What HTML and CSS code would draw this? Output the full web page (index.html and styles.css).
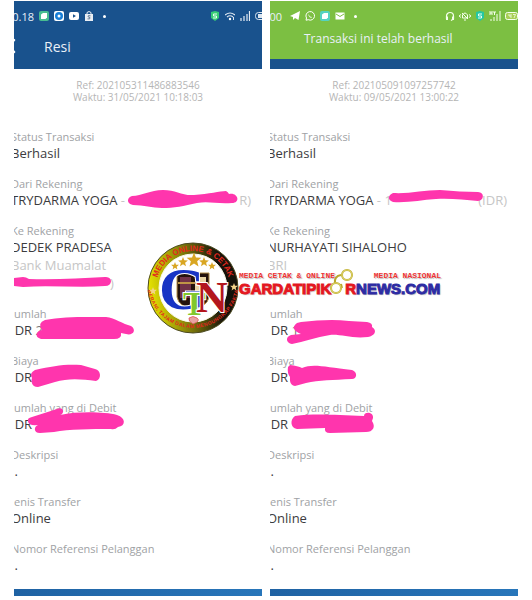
FILE: index.html
```html
<!DOCTYPE html>
<html lang="id">
<head>
  <meta charset="UTF-8" />
  <meta name="viewport" content="width=device-width, initial-scale=1.0"/>
  <title>Resi Transaksi</title>
  <link rel="stylesheet" href="styles.css">
</head>
<body>
  <main class="receipts">

    <!-- Resi 1 -->
    <section class="receipt">
      <header class="header">
        <div class="status-bar">
          <span class="clock">10.18</span>
          <svg class="icon" viewBox="0 0 10 10"><rect width="10" height="10" rx="2" fill="#48bd91"/><path d="M2 3.500 4 2h4v4.500L6.500 8H2z" fill="#fff"/></svg>
          <svg class="icon" viewBox="0 0 10 10"><rect width="10" height="10" rx="2" fill="#fff"/><circle cx="5" cy="5" r="4" fill="#187fd8"/><circle cx="5" cy="5" r="1.500" fill="#fff"/></svg>
          <svg class="icon" viewBox="0 0 10 10"><rect y="1" width="10" height="8" rx="2" fill="#fff"/><path d="M4 3.200v3.600L7 5z" fill="#19528d"/></svg>
          <svg class="icon" viewBox="0 0 10 10"><path d="M1 3h8v7H1z" fill="#e9eef4"/><path d="M3 3V1.500Q5-.5 7 1.500V3" fill="none" stroke="#e9eef4"/><path d="M6.500 4.800Q3.500 4 4 5.700L6 6.600Q6.500 8.500 3.500 7.900" fill="none" stroke="#58708c" stroke-width=".9"/></svg>
          <span class="dot"></span>
          <span class="system">
            <svg class="icon" viewBox="0 0 10 10"><path d="M1 1 5 0l4 1v6L5 10 1 7z" fill="#35cb75"/><path d="M7 3H3.500v2h3v2H3" fill="none" stroke="#e8fff0"/></svg>
            <svg class="icon" viewBox="0 0 10 10"><path d="M0 4q5-4 10 0M2 6q3-2.500 6 0" fill="none" stroke="#dbe5ef" stroke-width="1.200"/><circle cx="5" cy="8" r="1.200" fill="#fff"/><path d="M8.500 6v3" stroke="#dbe5ef"/></svg>
            <svg class="icon" viewBox="0 0 10 10"><path d="M1 7v3M4 5v5M7 3v7M9.500 0v10" stroke="#e4ecf4" stroke-width="1.200"/></svg>
            <svg class="icon battery" viewBox="0 0 14 10"><rect x=".5" y="1.500" width="13" height="7" rx="3" fill="none" stroke="#dbe5ef"/><path d="M3 3h5v4H3z" fill="#dbe5ef"/></svg>
          </span>
        </div>
        <div class="title-bar">
          <button type="button" class="back" aria-label="Kembali"><svg viewBox="0 0 12 16"><path d="m10 2-7 6 7 6" fill="none" stroke="#fff" stroke-width="2.500" stroke-linecap="round"/></svg></button>
          <h1 class="title">Resi</h1>
        </div>
      </header>

      <p class="meta">Ref: 202105311486883546<br>Waktu: 31/05/2021 10:18:03</p>

      <dl class="details">
        <div class="row"><dt>Status Transaksi</dt><dd>Berhasil</dd></div>
        <div class="row">
          <dt>Dari Rekening</dt>
          <dd class="account"><span>TRYDARMA YOGA <i>-</i></span><i>R)</i>
            <svg class="scribble" viewBox="0 0 248 30"><path d="M118 6C128 6 136 0 149 0C162 0 168 6 180 5C195 4 206 1 212 1Q214 2 215 4C224 2 227 13 218 13C202 14 195 11 183 13C170 16 160 18 148 18C138 18 130 15 119 15C112 14 113 7 118 6Z"/></svg>
          </dd>
        </div>
        <div class="row">
          <dt>Ke Rekening</dt>
          <dd>DEDEK PRADESA</dd>
          <dd><i>Bank Muamalat</i></dd>
          <dd class="number"><i>)</i>
            <svg class="scribble" viewBox="0 0 248 30"><path d="M0 6 9 5Q12 5 15 7C42 8 67 6 91 5C99 4 99 14 91 14C65 16 35 13 9 15L0 14Z"/></svg>
          </dd>
        </div>
        <div class="row">
          <dt>Jumlah</dt>
          <dd>IDR <i class="digit">2</i>
            <svg class="scribble" viewBox="0 0 248 30"><path d="M31 0C50-4 78-3 92-3C101-2 109 4 117 6C123 10 119 16 112 14L107 13Q108 19 100 19L27 19C20 17 22 11 28 10Q23 3 31 0Z"/></svg>
          </dd>
        </div>
        <div class="row">
          <dt>Biaya</dt>
          <dd>IDR
            <svg class="scribble" viewBox="0 0 248 30"><path d="M21 3C39-1 50-3 67-2L81 2C87 3 88 12 82 14C67 12 54 11 41 15L24 20C17 20 17 13 18 11Q15 6 21 3Z"/></svg>
          </dd>
        </div>
        <div class="row">
          <dt>Jumlah yang di Debit</dt>
          <dd>IDR
            <svg class="scribble" viewBox="0 0 248 30"><path d="M18 3 43-5C50-8 51 0 46 1C65-3 91-2 103 1C112 4 112 12 104 13Q101 16 97 15C77 15 55 15 40 18L26 19C19 19 20 12 24 11Q14 12 14 7Q13 4 18 3Z"/></svg>
          </dd>
        </div>
        <div class="row"><dt>Deskripsi</dt><dd>&nbsp;.</dd></div>
        <div class="row"><dt>Jenis Transfer</dt><dd>Online</dd></div>
        <div class="row"><dt>Nomor Referensi Pelanggan</dt><dd>&nbsp;.</dd></div>
      </dl>
      <div class="bottom-bar"></div>
    </section>

    <!-- Resi 2 -->
    <section class="receipt">
      <header class="header success">
        <div class="status-bar">
          <span class="clock">13:00</span>
          <svg class="icon" viewBox="0 0 10 10"><path d="M0 5 10 0 8.500 9 5 7 3 9V6z" fill="#fff"/></svg>
          <svg class="icon" viewBox="0 0 10 10"><path d="M1 9.200 1.500 7A4.300 4.300 0 1 1 3.300 8.700z" fill="none" stroke="#fff"/><path d="M3.500 3C3 5 5 7.500 7 6.700L6 5.500 5 5.700 4.300 4.400z" fill="#fff"/></svg>
          <svg class="icon" viewBox="0 0 10 10"><rect width="10" height="10" rx="2" fill="#54d3c0"/><path d="M2 3.500 4 2h4v4.500L6.500 8H2z" fill="#fff"/></svg>
          <svg class="icon" viewBox="0 0 10 10"><rect x=".5" y="1.500" width="9" height="7" fill="#fff"/><path d="m1 3 4 2.500L9 3" fill="none" stroke="#7cbf42"/></svg>
          <span class="dot"></span>
          <span class="system">
            <svg class="icon" viewBox="0 0 10 10"><path d="M1.500 8V5a3.500 3.500 0 0 1 7 0v3L6 9.500" fill="none" stroke="#f5ffec" stroke-width="1.200"/><path d="M1 5.500h2V9H1zM7 5.500h2V9H7z" fill="#f5ffec"/></svg>
            <svg class="icon bell" viewBox="0 0 12 10"><path d="M3.500 7V4q2.500-4 5 0v3zM5 9h2M2 3.500 0 5l2 1.500M10 3.500 12 5l-2 1.500M3 2l6 6" fill="none" stroke="#f5ffec"/></svg>
            <svg class="icon" viewBox="0 0 10 10"><path d="M1 1 5 0l4 1v6L5 10 1 7z" fill="#24c7a3"/><path d="M7 3H3.500v2h3v2H3" fill="none" stroke="#e8fff0"/></svg>
            <svg class="icon signal" viewBox="0 0 12 10"><path d="M1 0v4M3 0v4M1 2h2M4 1h3M5.500 1v3M2 8v2M5 6v4M8 3v7M11 0v10" fill="none" stroke="#f5ffec"/></svg>
            <svg class="icon battery" viewBox="0 0 14 10"><rect x=".5" y="1.500" width="12" height="7" rx="2" fill="#a8cf55" stroke="#f5ffec"/><path d="M4 3v2h2M6 3v4M8 3.500h2.500L9 7" fill="none" stroke="#f5ffec" stroke-width=".8"/></svg>
          </span>
        </div>
        <p class="toast">Transaksi ini telah berhasil</p>
      </header>

      <p class="meta">Ref: 202105091097257742<br>Waktu: 09/05/2021 13:00:22</p>

      <dl class="details">
        <div class="row"><dt>Status Transaksi</dt><dd>Berhasil</dd></div>
        <div class="row">
          <dt>Dari Rekening</dt>
          <dd class="account"><span>TRYDARMA YOGA <i>- 1</i></span><i>(IDR)</i>
            <svg class="scribble" viewBox="0 0 248 30"><path d="M123 3C139 4 154 0 170 0C184 1 196 2 208 2C215 2 214 11 208 11C195 10 180 8 166 9C151 10 138 13 123 12C117 10 118 5 123 3Z"/></svg>
          </dd>
        </div>
        <div class="row">
          <dt>Ke Rekening</dt>
          <dd>NURHAYATI SIHALOHO</dd>
          <dd><i>BRI</i></dd>
          <dd class="number"></dd>
        </div>
        <div class="row">
          <dt>Jumlah</dt>
          <dd>IDR <i class="digit">1</i>
            <svg class="scribble" viewBox="0 0 248 30"><path d="M31 2C49 0 64-1 79 1L97 2Q103 3 102 7C108 11 104 16 98 17C82 19 71 14 60 15C46 17 34 22 22 24C16 23 15 17 21 15L31 14Q19 9 27 3Z"/></svg>
          </dd>
        </div>
        <div class="row">
          <dt>Biaya</dt>
          <dd>IDR
            <svg class="scribble" viewBox="0 0 248 30"><path d="M20-2Q28-1 32 1C43-4 55 0 82 3C88 5 87 12 82 12C63 13 49 13 36 16L25 19C19 18 20 12 20 10Q17 6 18 0Z"/></svg>
          </dd>
        </div>
        <div class="row">
          <dt>Jumlah yang di Debit</dt>
          <dd>IDR
            <svg class="scribble" viewBox="0 0 248 30"><path d="M25 2C45-1 66 1 94 2C94-3 104-2 103 4L102 7C106 13 103 18 96 18L60 19Q54 19 55 14L27 15C20 14 20 5 25 2Z"/></svg>
          </dd>
        </div>
        <div class="row"><dt>Deskripsi</dt><dd>&nbsp;.</dd></div>
        <div class="row"><dt>Jenis Transfer</dt><dd>Online</dd></div>
        <div class="row"><dt>Nomor Referensi Pelanggan</dt><dd>&nbsp;.</dd></div>
      </dl>
      <div class="bottom-bar"></div>
    </section>

    <!-- Watermark -->
    <div class="watermark">
      <svg class="emblem" viewBox="0 0 92 92">
        <defs>
          <linearGradient id="ring" x1="0" y1=".5" x2="1" y2=".4">
            <stop offset="0" stop-color="#e8e500"/>
            <stop offset=".45" stop-color="#77730b"/>
            <stop offset=".8" stop-color="#15120a"/>
          </linearGradient>
          <path id="arcTop" d="M9 46a37 37 0 0 1 74 0"/>
          <path id="arcBottom" d="M5 40a41 41 0 0 0 82 0"/>
          <path id="star" d="m0-5 1.300 3.300 3.600.2-2.800 2.300.9 3.500L0 2.300l-3 2 .9-3.500-2.800-2.300 3.600-.2z"/>
        </defs>
        <circle cx="46" cy="46" r="45" fill="url(#ring)" stroke="#4b4920"/>
        <circle cx="46" cy="46" r="34" fill="#fff" stroke="#f8f8e7"/>
        <text class="ring-text"><textPath href="#arcTop" startOffset="50%" text-anchor="middle">MEDIA ONLINE &amp; CETAK</textPath></text>
        <text class="ring-text small" dy="5"><textPath href="#arcBottom" startOffset="50%" text-anchor="middle">BERANI, TAJAM DALAM MENGUNGKAP FAKTA</textPath></text>
        <g fill="#d9a622">
          <use href="#star" transform="translate(28 24) scale(.8)"/>
          <use href="#star" transform="translate(36 20)"/>
          <use href="#star" transform="translate(47 18) scale(1.500)"/>
          <use href="#star" transform="translate(57 20)"/>
          <use href="#star" transform="translate(65 24) scale(.8)"/>
          <use href="#star" transform="translate(6 49) scale(.8)" fill="#f4d58a"/>
          <use href="#star" transform="translate(87 45) scale(.8)" fill="#f4d58a"/>
        </g>
        <path d="M30 31h32v24q-2 10-16 12-14-2-16-12z" fill="#24120c" stroke="#b6904b"/>
        <path d="M33 35h11v21H33z" fill="#713248"/>
        <path d="M48 35h11v21H48z" fill="#e9d4a4"/>
        <path d="M31 41h30" stroke="#bf9646" stroke-width="2"/>
        <path d="M42 76q4-3 8 0t-4 6q-5-3-4-6z" fill="#e8a3a3" stroke="#d55" stroke-width=".8"/>
        <text class="letter g" x="12" y="67">G</text>
        <text class="letter i" x="36" y="73">T</text>
        <text class="letter n" x="49" y="70">N</text>
      </svg>
      <div class="wordmark">
        <div class="tagline"><span>MEDIA CETAK &amp; ONLINE</span><span>MEDIA NASIONAL</span></div>
        <div class="brand">
          <span class="red">GARDATIPIK</span>
          <svg class="cuffs" viewBox="0 0 24 26"><g fill="none" stroke="#b9a82c" stroke-width="2"><circle cx="6" cy="19" r="5"/><circle cx="17" cy="6" r="5"/><path d="M5 14Q4 7 11 6M12 19l-1-4"/></g><circle cx="6" cy="19" r="5" fill="none" stroke="#f2eb86" stroke-width=".7"/><circle cx="17" cy="6" r="5" fill="none" stroke="#f2eb86" stroke-width=".7"/></svg>
          <span class="red">R</span><span class="blue">NEWS.COM</span>
        </div>
      </div>
    </div>
  </main>
</body>
</html>
```
FILE: styles.css
```css
* { box-sizing: border-box; }
body {
  margin: 0;
  padding: 1px 14px;
  background: #fff;
  font-family: "Open Sans", "Noto Sans", sans-serif;
}
.receipts {
  position: relative;
  display: grid;
  grid-template-columns: 1fr 1fr;
  gap: 8px;
}
.receipt { min-width: 0; overflow: hidden; }

/* Header */
.header {
  height: 68px;
  background: #19528d;
  color: #e9f0f7;
}
.header.success {
  background: #7cbf42;
  border-bottom: 10px solid #19528d;
}
.status-bar {
  display: flex;
  align-items: center;
  gap: 5px;
  height: 30px;
  margin-right: -7px;
}
.clock {
  width: 20px;
  display: flex;
  justify-content: flex-end;
  font-size: 11px;
}
.success .clock { width: 12px; margin-right: 3px; }
.icon { width: 10px; height: 10px; flex: none; }
.icon.battery { width: 14px; }
.icon.bell, .icon.signal { width: 12px; }
.dot {
  width: 3px;
  height: 3px;
  margin-left: 4px;
  border-radius: 50%;
  background: #fff;
}
.system {
  display: flex;
  gap: 5px;
  margin-left: auto;
}
.success .system { gap: 4px; margin-right: 6px; }
.title-bar {
  display: flex;
  align-items: center;
  gap: 28px;
  height: 30px;
}
.back {
  width: 12px;
  height: 16px;
  margin-left: -10px;
  padding: 0;
  border: none;
  background: none;
  cursor: pointer;
}
.back svg { display: block; }
.title { margin: 0; font-size: 14px; font-weight: 400; }
.toast {
  margin: 0;
  padding-left: 34px;
  font-size: 12px;
  line-height: 16px;
}

.meta {
  margin: 0;
  padding: 10px 0 26px;
  text-align: center;
  font-size: 10px;
  line-height: 12px;
  color: #b5b5b5;
}

/* Details */
.details {
  display: flex;
  flex-direction: column;
  gap: 14px;
  margin: 0 0 15px -3px;
}
dt { font-size: 11px; line-height: 16px; color: #a0a2a5; }
dd {
  position: relative;
  height: 17px;
  margin: 0;
  font-size: 13px;
  line-height: 17px;
  color: #3c3c3e;
}
dd + dd { height: 18px; line-height: 18px; }
dd i { font-style: normal; color: #c6c6c6; }
dd .digit { color: #777; }
.account {
  display: flex;
  justify-content: space-between;
  padding-right: 11px;
}
.number { padding-left: 99px; }
.scribble {
  position: absolute;
  top: -2px;
  left: 3px;
  width: 248px;
  height: 30px;
  overflow: visible;
  fill: #ff35ad;
  z-index: 1;
}
.bottom-bar {
  height: 7px;
  background: linear-gradient(90deg, #1f62a3, #2876ba);
}

/* Watermark */
.watermark {
  position: absolute;
  top: 240px;
  left: 133px;
  display: flex;
  align-items: center;
  z-index: 2;
}
.emblem { width: 92px; height: 94px; flex: none; }
.ring-text {
  font: bold 8px "Liberation Sans", sans-serif;
  fill: #e3281e;
}
.ring-text.small { font-size: 5px; }
.letter {
  font-family: "Liberation Serif", serif;
  font-weight: bold;
  stroke: #fff;
  stroke-width: 2px;
  paint-order: stroke;
}
.letter.g { font-size: 60px; fill: #1834c4; }
.letter.i { font-size: 34px; fill: #81c72c; }
.letter.n { font-size: 44px; fill: #b3161d; }
.wordmark {
  width: 202px;
  font-family: "Liberation Sans", sans-serif;
  text-shadow: 0 0 2px #fff, 1px 1px 1px #aaa;
}
.tagline {
  display: flex;
  justify-content: space-between;
  margin-top: -8px;
  font: bold 8px "Liberation Mono", monospace;
  line-height: 8px;
  color: #ee3434;
}
.brand {
  display: flex;
  align-items: center;
  height: 17px;
  font-size: 15px;
  font-weight: bold;
}
.red { color: #e4171f; -webkit-text-stroke: 1px #e4171f; }
.blue { color: #2d2ba3; -webkit-text-stroke: 1px #2d2ba3; }
.cuffs { width: 24px; height: 26px; margin: -12px -9px 0 -1px; flex: none; }
```
